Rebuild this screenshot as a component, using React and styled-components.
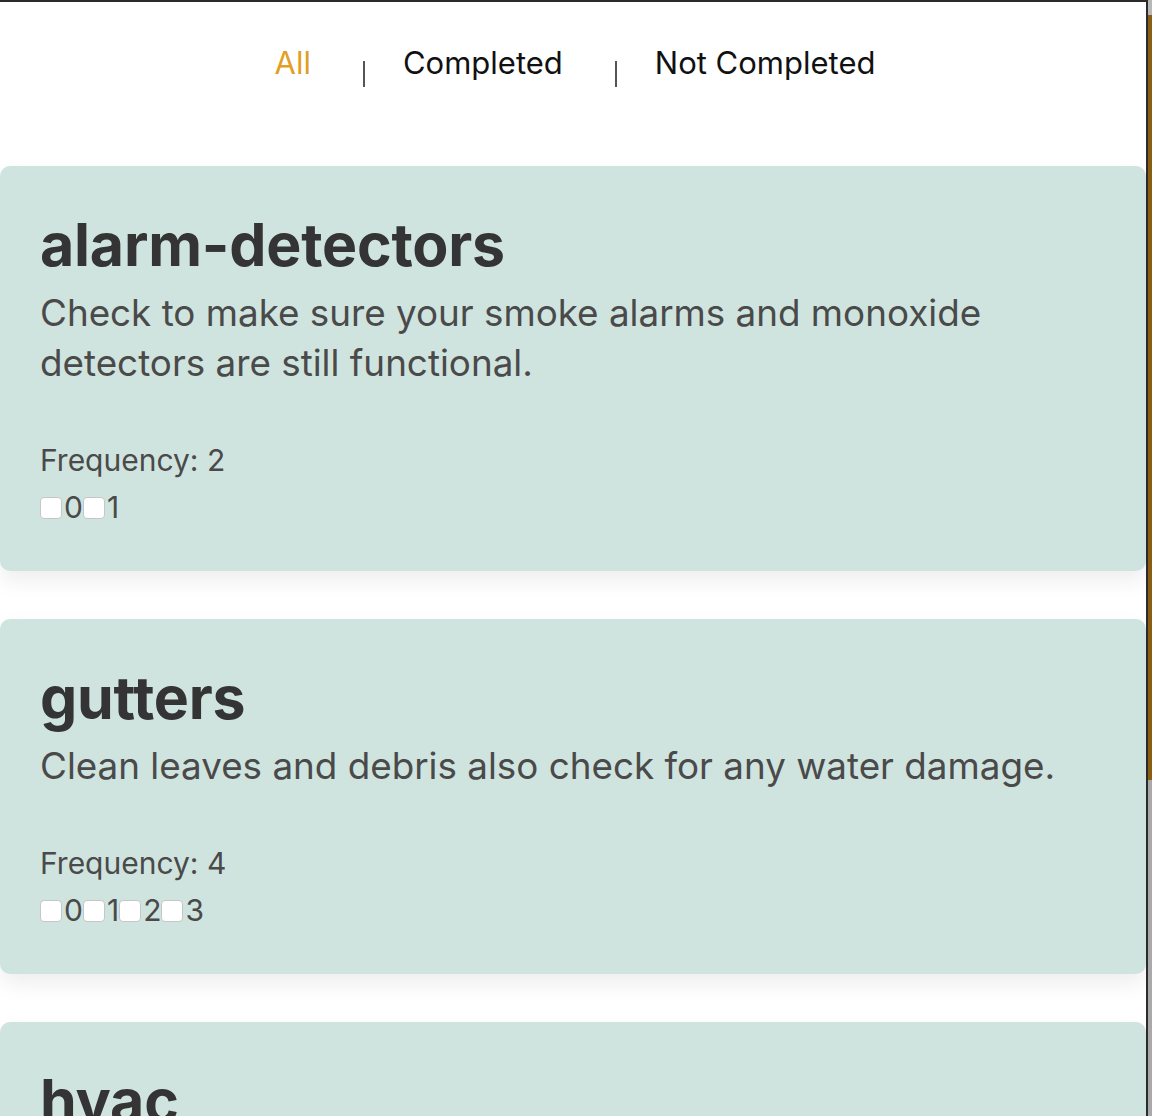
import React from "react";
import styled, { createGlobalStyle } from "styled-components";

const tasks = [
  {
    name: "alarm-detectors",
    description:
      "Check to make sure your smoke alarms and monoxide detectors are still functional.",
    frequency: 2,
  },
  {
    name: "gutters",
    description: "Clean leaves and debris also check for any water damage.",
    frequency: 4,
  },
  {
    name: "hvac",
    description: "Replace the air filter and check the system.",
    frequency: 4,
  },
];

const filters = ["All", "Completed", "Not Completed"];

export default function App() {
  return (
    <>
      <GlobalStyle />
      <Frame>
        <Content>
          <Nav>
            {filters.map((f, i) => (
              <React.Fragment key={f}>
                {i > 0 && <Divider />}
                <NavLink active={i === 0} first={i === 0}>
                  {f}
                </NavLink>
              </React.Fragment>
            ))}
          </Nav>
          <List>
            {tasks.map((task) => (
              <Card key={task.name}>
                <Title>{task.name}</Title>
                <Description>{task.description}</Description>
                <Frequency>Frequency: {task.frequency}</Frequency>
                <Checks>
                  {Array.from({ length: task.frequency }).map((_, n) => (
                    <label key={n}>
                      <Box type="checkbox" />
                      {n}
                    </label>
                  ))}
                </Checks>
              </Card>
            ))}
          </List>
        </Content>
        <Edge />
      </Frame>
    </>
  );
}

const GlobalStyle = createGlobalStyle`
  html, body {
    margin: 0;
    padding: 0;
    background: #ffffff;
    overflow: hidden;
  }
  body {
    font-family: Inter, "Liberation Sans", sans-serif;
  }
`;

const Frame = styled.div`
  display: flex;
  height: 1116px;
  overflow: hidden;
`;

const Content = styled.div`
  width: 1148px;
  border-top: 2px solid #2b2b2b;
  border-right: 2px solid #2b2b2b;
  box-sizing: border-box;
  overflow: hidden;
  background: #ffffff;
`;

const Edge = styled.div`
  flex: 1;
  background: linear-gradient(
    to bottom,
    #b8b8b8 0,
    #b8b8b8 15px,
    #8a5e12 15px,
    #8a5e12 780px,
    #a9a9a9 780px
  );
`;

const Nav = styled.nav`
  display: flex;
  justify-content: center;
  align-items: flex-start;
  padding-top: 41px;
  padding-left: 56px;
  height: 164px;
  box-sizing: border-box;
`;

const NavLink = styled.a`
  font-size: 31px;
  line-height: 40px;
  color: ${({ active }) => (active ? "#e19f26" : "#111111")};
  cursor: pointer;
  margin: 0 52px 0 38px;
  margin-left: ${({ first }) => (first ? "0" : "38px")};
`;

const Divider = styled.span`
  width: 2px;
  height: 26px;
  margin-top: 18px;
  background: #555555;
`;

const List = styled.div`
  display: flex;
  flex-direction: column;
  gap: 48px;
`;

const Card = styled.section`
  background: #d0e4df;
  border-radius: 10px;
  padding: 45px 40px 44px;
  box-shadow: 0 10px 22px rgba(0, 0, 0, 0.07);
  color: #4a4a4a;
`;

const Title = styled.h2`
  margin: 0;
  font-size: 59px;
  line-height: 68px;
  font-weight: 700;
  color: #343434;
  letter-spacing: -0.2px;
`;

const Description = styled.p`
  margin: 9px 0 0;
  font-size: 36.8px;
  line-height: 50px;
  color: #4a4a4a;
`;

const Frequency = styled.div`
  margin-top: 52px;
  font-size: 30px;
  line-height: 40px;
`;

const Checks = styled.div`
  margin-top: 7px;
  font-size: 30px;
  line-height: 40px;
`;

const Box = styled.input`
  appearance: none;
  width: 22px;
  height: 22px;
  margin: 0 2px 0 0;
  background: #ffffff;
  border: 1px solid #c6c6c6;
  border-radius: 4px;
  box-sizing: border-box;
  vertical-align: -1px;
`;
